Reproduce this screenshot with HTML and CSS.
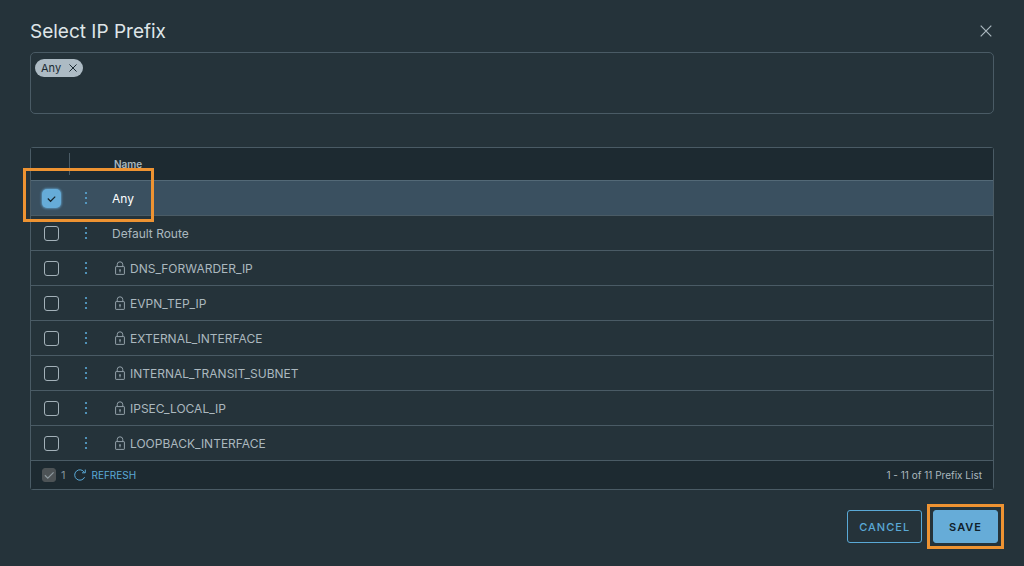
FILE: index.html
```
<!DOCTYPE html>
<html lang="en">
<head>
  <meta charset="UTF-8">
  <meta name="viewport" content="width=device-width, initial-scale=1.0">
  <title>Select IP Prefix</title>
  <link rel="stylesheet" href="styles.css">
</head>
<body>
  <svg class="sprite" aria-hidden="true">
    <symbol id="dots" viewBox="0 0 4 14">
      <circle cx="2" cy="2" r="1.1"/>
      <circle cx="2" cy="7" r="1.1"/>
      <circle cx="2" cy="12" r="1.1"/>
    </symbol>
    <symbol id="lock" viewBox="0 0 10 14">
      <rect x="0.6" y="5.6" width="8.8" height="7.8" rx="0.5"/>
      <path d="M2.2 5.6V3.6a2.8 2.8 0 0 1 5.6 0v2M5 9v2.4"/>
      <circle cx="5" cy="9" r="0.5"/>
    </symbol>
    <symbol id="cross" viewBox="0 0 12 12">
      <path d="M0.7 0.7l10.6 10.6M11.3 0.7L0.7 11.3"/>
    </symbol>
  </svg>

  <main class="dialog">
    <header class="dialog-header">
      <h1>Select IP Prefix</h1>
      <button class="close" type="button" aria-label="Close"><svg><use href="#cross"/></svg></button>
    </header>

    <div class="selection">
      <span class="chip">Any <button type="button" aria-label="Remove Any"><svg><use href="#cross"/></svg></button></span>
    </div>

    <section class="grid">
      <table>
        <thead>
          <tr>
            <th class="col-check"></th>
            <th class="col-menu"></th>
            <th class="col-name">Name</th>
          </tr>
        </thead>
        <tbody>
          <tr class="selected">
            <td><input type="checkbox" aria-label="Any" checked></td>
            <td><button class="menu" type="button" aria-label="Actions"><svg><use href="#dots"/></svg></button></td>
            <td>Any</td>
          </tr>
          <tr>
            <td><input type="checkbox" aria-label="Default Route"></td>
            <td><button class="menu" type="button" aria-label="Actions"><svg><use href="#dots"/></svg></button></td>
            <td>Default Route</td>
          </tr>
          <tr>
            <td><input type="checkbox" aria-label="DNS_FORWARDER_IP"></td>
            <td><button class="menu" type="button" aria-label="Actions"><svg><use href="#dots"/></svg></button></td>
            <td><span class="locked"><svg><use href="#lock"/></svg>DNS_FORWARDER_IP</span></td>
          </tr>
          <tr>
            <td><input type="checkbox" aria-label="EVPN_TEP_IP"></td>
            <td><button class="menu" type="button" aria-label="Actions"><svg><use href="#dots"/></svg></button></td>
            <td><span class="locked"><svg><use href="#lock"/></svg>EVPN_TEP_IP</span></td>
          </tr>
          <tr>
            <td><input type="checkbox" aria-label="EXTERNAL_INTERFACE"></td>
            <td><button class="menu" type="button" aria-label="Actions"><svg><use href="#dots"/></svg></button></td>
            <td><span class="locked"><svg><use href="#lock"/></svg>EXTERNAL_INTERFACE</span></td>
          </tr>
          <tr>
            <td><input type="checkbox" aria-label="INTERNAL_TRANSIT_SUBNET"></td>
            <td><button class="menu" type="button" aria-label="Actions"><svg><use href="#dots"/></svg></button></td>
            <td><span class="locked"><svg><use href="#lock"/></svg>INTERNAL_TRANSIT_SUBNET</span></td>
          </tr>
          <tr>
            <td><input type="checkbox" aria-label="IPSEC_LOCAL_IP"></td>
            <td><button class="menu" type="button" aria-label="Actions"><svg><use href="#dots"/></svg></button></td>
            <td><span class="locked"><svg><use href="#lock"/></svg>IPSEC_LOCAL_IP</span></td>
          </tr>
          <tr>
            <td><input type="checkbox" aria-label="LOOPBACK_INTERFACE"></td>
            <td><button class="menu" type="button" aria-label="Actions"><svg><use href="#dots"/></svg></button></td>
            <td><span class="locked"><svg><use href="#lock"/></svg>LOOPBACK_INTERFACE</span></td>
          </tr>
        </tbody>
      </table>
      <div class="grid-footer">
        <label class="count"><input type="checkbox" checked disabled> 1</label>
        <button class="refresh" type="button">
          <svg viewBox="0 0 12 12"><path d="M10.6 8.2A5.2 5.2 0 1 1 10.4 3.4M11.3 0.6v3.2H8"/></svg>
          REFRESH
        </button>
        <span class="range">1 - 11 of 11 Prefix List</span>
      </div>
      <div class="mark mark-row"></div>
    </section>

    <footer class="actions">
      <button class="btn" type="button">CANCEL</button>
      <div class="save-wrap">
        <button class="btn btn-primary" type="button">SAVE</button>
        <div class="mark mark-save"></div>
      </div>
    </footer>
  </main>
</body>
</html>
```
FILE: styles.css
```
* {
  box-sizing: border-box;
}
body {
  margin: 0;
  background-color: #25333a;
  color: #abb8bf;
  font-family: Inter, Lato, sans-serif;
  font-size: 11px;
}
button {
  padding: 0;
  border: none;
  background: none;
  color: inherit;
  font: inherit;
  cursor: pointer;
}
svg {
  display: block;
  fill: none;
  stroke: currentColor;
}
.sprite {
  position: absolute;
  width: 0;
  height: 0;
}
.dialog {
  padding: 16px 30px;
}
.dialog-header {
  display: flex;
  justify-content: space-between;
  align-items: center;
  height: 30px;
  margin-bottom: 6px;
}
h1 {
  margin: 0;
  color: #dfe5e8;
  font-size: 19px;
  font-weight: 400;
}
.close svg {
  width: 12px;
  height: 12px;
  margin-right: 2px;
  stroke-width: 1.2;
}
.selection {
  min-height: 62px;
  padding: 6px 4px;
  border: 1px solid #4a5b65;
  border-radius: 5px;
}
.chip {
  display: inline-flex;
  align-items: center;
  gap: 8px;
  height: 18px;
  padding: 0 6px;
  border-radius: 9px;
  background-color: #adbbc4;
  color: #1b2a32;
}
.chip svg {
  width: 8px;
  height: 8px;
  stroke-width: 1.5;
}

/* prefix list */
.grid {
  position: relative;
  margin-top: 33px;
  border: 1px solid #4a5b65;
  border-radius: 3px;
}
table {
  width: 100%;
  border-collapse: separate;
  border-spacing: 0;
  table-layout: fixed;
}
th {
  height: 32px;
  padding: 0;
  background-color: #1d2a31;
  text-align: left;
  font-weight: 600;
  font-size: 10px;
}
.col-check {
  width: 39px;
  background: linear-gradient(#4a5b65, #4a5b65) right center / 1px 22px no-repeat #1d2a31;
}
.col-menu {
  width: 31px;
}
.col-name {
  padding-left: 13px;
}
td {
  height: 35px;
  padding: 0;
  border-top: 1px solid #4a5b65;
  font-size: 12px;
}
td:last-child {
  padding-left: 11px;
}
td:first-child {
  padding-left: 13px;
}
.selected td {
  background-color: #3a5060;
  border-color: #536977;
  color: #fff;
}
input[type="checkbox"] {
  display: block;
  appearance: none;
  width: 15px;
  height: 15px;
  margin: 0;
  border: 1px solid #a3b1b9;
  border-radius: 3px;
}
input[type="checkbox"]:checked {
  border-color: #66acd8;
  background: #66acd8 url("data:image/svg+xml,%3Csvg xmlns='http://www.w3.org/2000/svg' viewBox='0 0 14 14'%3E%3Cpath d='M3 7l3 3 5-5' fill='none' stroke='%2316252d' stroke-width='1.3'/%3E%3C/svg%3E") center / 13px no-repeat;
  box-shadow: 0 0 0 2px #66acd8, 0 0 2px 3px #5487a8;
}
.menu {
  display: block;
  margin: 0 auto;
  color: #5aa9d6;
}
.menu svg {
  width: 4px;
  height: 14px;
  fill: currentColor;
  stroke: none;
}
.locked {
  display: flex;
  align-items: center;
  gap: 5px;
  padding-left: 3px;
}
.locked svg {
  width: 10px;
  height: 14px;
  color: #93a1a9;
}
.grid-footer {
  display: flex;
  align-items: center;
  height: 29px;
  padding: 0 11px;
  border-top: 1px solid #4a5b65;
  background-color: #1d2a31;
  font-size: 10px;
}
.count {
  display: flex;
  align-items: center;
  gap: 5px;
  color: #84929a;
  font-size: 11px;
}
.count input[type="checkbox"] {
  width: 14px;
  height: 14px;
  border-color: #4d5356;
  background: #4d5356 url("data:image/svg+xml,%3Csvg xmlns='http://www.w3.org/2000/svg' viewBox='0 0 14 14'%3E%3Cpath d='M2.5 7l3 3 6-6' fill='none' stroke='%238d989e' stroke-width='1.3'/%3E%3C/svg%3E") center / 13px no-repeat;
  box-shadow: none;
}
.refresh {
  display: flex;
  align-items: center;
  gap: 5px;
  margin-left: 9px;
  color: #5aa9d6;
}
.refresh svg {
  width: 12px;
  height: 12px;
}
.range {
  margin-left: auto;
}

/* buttons */
.actions {
  display: flex;
  justify-content: flex-end;
  gap: 11px;
  padding-top: 20px;
  margin-right: -4px;
}
.btn {
  height: 33px;
  padding: 0 11px;
  border: 1px solid #5aa9d6;
  border-radius: 3px;
  color: #5aa9d6;
  font-size: 11px;
  font-weight: 500;
  letter-spacing: 1px;
}
.btn-primary {
  padding: 0 15px;
  border-color: #66acd8;
  background-color: #66acd8;
  color: #10202a;
  font-weight: 600;
}
.save-wrap {
  position: relative;
}

/* highlight frames */
.mark {
  position: absolute;
  border: 3px solid #ee9332;
  pointer-events: none;
}
.mark-row {
  top: 20px;
  left: -8px;
  width: 131px;
  height: 54px;
}
.mark-save {
  inset: -6px;
}
```
